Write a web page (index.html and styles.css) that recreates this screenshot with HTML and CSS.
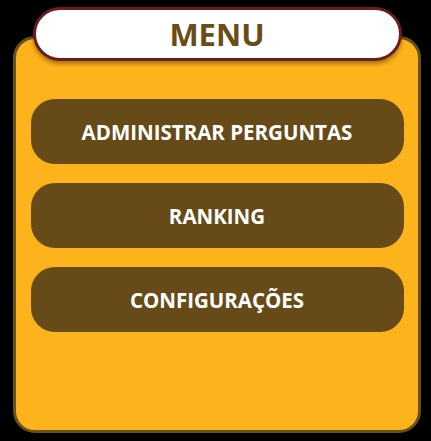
FILE: index.html
```html
<!DOCTYPE html>
<html lang="pt">
<head>
    <meta charset="UTF-8">
    <meta name="viewport" content="width=device-width, initial-scale=1.0">
    <title>Menu</title>
    <link rel="stylesheet" href="styles.css">
</head>
<body>
    <div class="panel">
        <div class="title">MENU</div>
        <div class="menu">
            <button class="menu-btn">ADMINISTRAR PERGUNTAS</button>
            <button class="menu-btn">RANKING</button>
            <button class="menu-btn">CONFIGURAÇÕES</button>
        </div>
    </div>
</body>
</html>
```
FILE: styles.css
```css
body {
    font-family: "Open Sans", Arial, sans-serif;
    background-color: #000;
    margin: 0;
    padding: 36px 10px 8px 13px;
}

.panel {
    box-sizing: border-box;
    width: 408px;
    height: 397px;
    background-color: #fdb31b;
    border: 3px solid #6a5119;
    border-radius: 22px;
    padding: 0 12px;
    display: flex;
    flex-direction: column;
    align-items: center;
}

.title {
    box-sizing: border-box;
    width: 369px;
    height: 54px;
    margin-top: -32px;
    background-color: #fff;
    border: 3px solid #6e1b1b;
    border-radius: 27px;
    box-shadow: 0 3px 4px rgba(0, 0, 0, 0.35);
    color: #6a4d15;
    font-size: 31px;
    font-weight: bold;
    display: flex;
    align-items: center;
    justify-content: center;
}

.menu {
    margin-top: 38px;
    display: flex;
    flex-direction: column;
    gap: 19px;
}

.menu-btn {
    width: 373px;
    height: 65px;
    background-color: #664b18;
    color: #fff;
    border: none;
    border-radius: 24px;
    font-family: "Open Sans", Arial, sans-serif;
    font-size: 20.5px;
    font-weight: bold;
    cursor: pointer;
}
```
